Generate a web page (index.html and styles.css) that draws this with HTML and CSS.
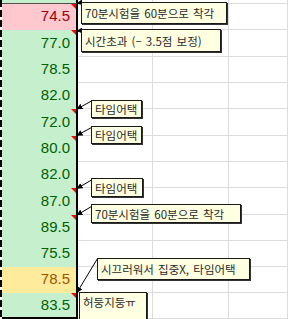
FILE: index.html
```html
<!DOCTYPE html>
<html lang="ko">
<head>
<meta charset="utf-8">
<title>Sheet</title>
<link rel="stylesheet" href="styles.css">
</head>
<body>
<div class="sheet">
  <div class="grid">
    <div class="val good top"></div><div class="cell"></div><div class="cell"></div><div class="cell"></div>

    <div class="val bad has-note">74.5</div><div class="cell"></div><div class="cell"></div><div class="cell"></div>
    <div class="val good has-note">77.0</div><div class="cell"></div><div class="cell"></div><div class="cell"></div>
    <div class="val good">78.5</div><div class="cell"></div><div class="cell"></div><div class="cell"></div>
    <div class="val good">82.0</div><div class="cell"></div><div class="cell"></div><div class="cell"></div>
    <div class="val good has-note">72.0</div><div class="cell"></div><div class="cell"></div><div class="cell"></div>
    <div class="val good has-note">80.0</div><div class="cell"></div><div class="cell"></div><div class="cell"></div>
    <div class="val good">82.0</div><div class="cell"></div><div class="cell"></div><div class="cell"></div>
    <div class="val good has-note">87.0</div><div class="cell"></div><div class="cell"></div><div class="cell"></div>
    <div class="val good has-note">89.5</div><div class="cell"></div><div class="cell"></div><div class="cell"></div>
    <div class="val good">75.5</div><div class="cell"></div><div class="cell"></div><div class="cell"></div>
    <div class="val neutral">78.5</div><div class="cell"></div><div class="cell"></div><div class="cell"></div>
    <div class="val good has-note last">83.5</div><div class="cell"></div><div class="cell"></div><div class="cell"></div>
  </div>

  <svg class="leaders" width="288" height="319" viewBox="0 0 288 319">
    <defs>
      <marker id="ah" viewBox="0 0 6 6" refX="5.5" refY="3" markerWidth="6" markerHeight="6" orient="auto" markerUnits="userSpaceOnUse">
        <path d="M0,0 L6,3 L0,6 Z" fill="#000"/>
      </marker>
    </defs>
    <g stroke="#000" stroke-width="1" fill="none">
      <line x1="82" y1="2.5" x2="77" y2="3.5" marker-end="url(#ah)"/>
      <line x1="82" y1="30.5" x2="77" y2="31" marker-end="url(#ah)"/>
      <line x1="91.5" y1="101" x2="77" y2="109" marker-end="url(#ah)"/>
      <line x1="91.5" y1="127.5" x2="77" y2="135.5" marker-end="url(#ah)"/>
      <line x1="91.5" y1="180" x2="77" y2="188.5" marker-end="url(#ah)"/>
      <line x1="91.5" y1="206.5" x2="77" y2="215" marker-end="url(#ah)"/>
      <line x1="97.5" y1="258.5" x2="77" y2="292.5" marker-end="url(#ah)"/>
    </g>
  </svg>

  <div class="note n1">70분시험을 60분으로 착각</div>
  <div class="note n2">시간초과 (– 3.5점 보정)</div>
  <div class="note n3">타임어택</div>
  <div class="note n4">타임어택</div>
  <div class="note n5">타임어택</div>
  <div class="note n6">70분시험을 60분으로 착각</div>
  <div class="note n7">시끄러워서 집중X, 타임어택</div>
  <div class="note n8">허둥지둥ㅠ</div>
</div>
</body>
</html>
```

FILE: styles.css
```css
html, body {
  margin: 0;
  padding: 0;
  background: #ffffff;
}

body {
  width: 288px;
  height: 319px;
  overflow: hidden;
}

.sheet {
  position: relative;
  width: 288px;
  height: 319px;
  overflow: hidden;
}

.sheet::before {
  content: "";
  position: absolute;
  left: 0;
  top: 0;
  width: 2px;
  height: 319px;
  background: repeating-linear-gradient(to bottom, #000 0 7px, #fff 7px 10px);
  z-index: 1;
}

.grid {
  display: grid;
  grid-template-columns: 78px 75px 76px 1fr;
  grid-template-rows: 4px 26px 27px 26px 26px 27px 26px 26px 27px 26px 26px 26px 26px;
}

.cell {
  box-sizing: border-box;
  border-right: 1px solid #dcdcdc;
  border-bottom: 1px solid #dcdcdc;
}

.val {
  position: relative;
  box-sizing: border-box;
  border-right: 2px solid #000;
  display: flex;
  align-items: flex-end;
  justify-content: flex-end;
  padding: 0 6px 6px 0;
  font-family: "Liberation Sans", Arial, sans-serif;
  font-size: 15px;
  line-height: 16px;
}

.good {
  background: #c6efce;
  color: #006100;
}

.bad {
  background: #ffc7ce;
  color: #9c0006;
}

.neutral {
  background: #ffeb9c;
  color: #9c5700;
}

.top {
  border-bottom: 1px solid #505050;
  padding: 0;
}

.last {
  border-bottom: 2px solid #000;
  padding-bottom: 4px;
}

.has-note::after {
  content: "";
  position: absolute;
  top: 0;
  right: 0;
  border-top: 5px solid #ff0000;
  border-left: 5px solid transparent;
}

.leaders {
  position: absolute;
  left: 0;
  top: 0;
  z-index: 2;
}

.note {
  position: absolute;
  box-sizing: border-box;
  display: flex;
  align-items: center;
  padding: 0 3px;
  background: #ffffe1;
  border: 1px solid #1a1a1a;
  box-shadow: 1px 1px 0 #333;
  color: #2a2a2a;
  font-family: "Noto Sans CJK KR", "Noto Sans", sans-serif;
  font-size: 11.5px;
  line-height: 16px;
  white-space: nowrap;
  word-spacing: 1px;
  z-index: 3;
}

.n1 { left: 81px; top: 2px; width: 146px; height: 22px; }
.n2 { left: 81px; top: 29px; width: 140px; height: 23px; }
.n3 { left: 91px; top: 100px; width: 51px; height: 18px; }
.n4 { left: 91px; top: 126px; width: 51px; height: 18px; }
.n5 { left: 91px; top: 178px; width: 52px; height: 19px; }
.n6 { left: 91px; top: 204px; width: 150px; height: 19px; }
.n7 { left: 97px; top: 258px; width: 153px; height: 22px; }
.n8 { left: 79px; top: 292px; width: 68px; height: 40px; align-items: flex-start; padding-top: 1px; }
```
